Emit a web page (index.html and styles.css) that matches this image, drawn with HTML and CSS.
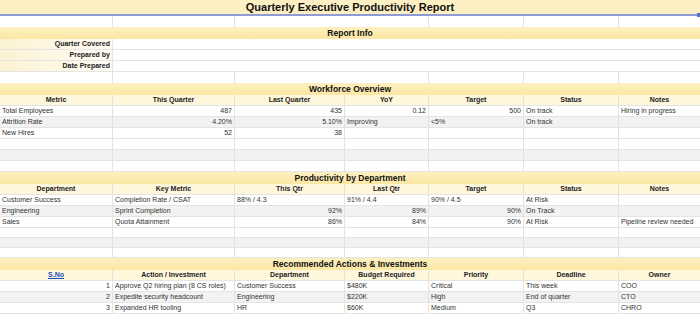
FILE: index.html
```html
<!DOCTYPE html>
<html>
<head>
<meta charset="utf-8">
<link rel="stylesheet" href="styles.css">
</head>
<body>
<div class="sheet">
  <div class="title">Quarterly Executive Productivity Report</div>
  <div class="row spacer"><div></div><div></div><div class="m2"></div><div></div><div></div><div></div></div>

  <div class="section">Report Info</div>
  <div class="row info"><div class="lab">Quarter Covered</div><div class="span"></div></div>
  <div class="row info"><div class="lab">Prepared by</div><div class="span"></div></div>
  <div class="row info"><div class="lab">Date Prepared</div><div class="span"></div></div>
  <div class="row spacer"><div></div><div></div><div class="m2"></div><div></div><div></div><div></div></div>

  <div class="section">Workforce Overview</div>
  <div class="row head"><div>Metric</div><div>This Quarter</div><div>Last Quarter</div><div>YoY</div><div>Target</div><div>Status</div><div>Notes</div></div>
  <div class="row"><div>Total Employees</div><div class="r">487</div><div class="r">435</div><div class="r">0.12</div><div class="r">500</div><div>On track</div><div>Hiring in progress</div></div>
  <div class="row alt"><div>Attrition Rate</div><div class="r">4.20%</div><div class="r">5.10%</div><div>Improving</div><div>&lt;5%</div><div>On track</div><div></div></div>
  <div class="row"><div>New Hires</div><div class="r">52</div><div class="r">38</div><div></div><div></div><div></div><div></div></div>
  <div class="row"><div></div><div></div><div></div><div></div><div></div><div></div><div></div></div>
  <div class="row alt"><div></div><div></div><div></div><div></div><div></div><div></div><div></div></div>
  <div class="row"><div></div><div></div><div></div><div></div><div></div><div></div><div></div></div>

  <div class="section">Productivity by Department</div>
  <div class="row head"><div>Department</div><div>Key Metric</div><div>This Qtr</div><div>Last Qtr</div><div>Target</div><div>Status</div><div>Notes</div></div>
  <div class="row"><div>Customer Success</div><div>Completion Rate / CSAT</div><div>88% / 4.3</div><div>91% / 4.4</div><div>90% / 4.5</div><div>At Risk</div><div></div></div>
  <div class="row alt"><div>Engineering</div><div>Sprint Completion</div><div class="r">92%</div><div class="r">89%</div><div class="r">90%</div><div>On Track</div><div></div></div>
  <div class="row"><div>Sales</div><div>Quota Attainment</div><div class="r">86%</div><div class="r">84%</div><div class="r">90%</div><div>At Risk</div><div>Pipeline review needed</div></div>
  <div class="row short"><div></div><div></div><div></div><div></div><div></div><div></div><div></div></div>
  <div class="row short alt"><div></div><div></div><div></div><div></div><div></div><div></div><div></div></div>
  <div class="row short"><div></div><div></div><div></div><div></div><div></div><div></div><div></div></div>

  <div class="section">Recommended Actions &amp; Investments</div>
  <div class="row head"><div><a class="link" href="#">S.No</a></div><div>Action / Investment</div><div>Department</div><div>Budget Required</div><div>Priority</div><div>Deadline</div><div>Owner</div></div>
  <div class="row"><div class="r">1</div><div>Approve Q2 hiring plan (8 CS roles)</div><div>Customer Success</div><div>$480K</div><div>Critical</div><div>This week</div><div>COO</div></div>
  <div class="row alt"><div class="r">2</div><div>Expedite security headcount</div><div>Engineering</div><div>$220K</div><div>High</div><div>End of quarter</div><div>CTO</div></div>
  <div class="row"><div class="r">3</div><div>Expanded HR tooling</div><div>HR</div><div>$60K</div><div>Medium</div><div>Q3</div><div>CHRO</div></div>
  <div class="handle"></div>
</div>
</body>
</html>
```
FILE: styles.css
```css
* { box-sizing: border-box; }
html, body { margin: 0; padding: 0; background: #fff; }
body { font-family: "Liberation Sans", Arial, sans-serif; color: #333; }
.sheet { width: 700px; position: relative; overflow: hidden; }
.title {
  height: 16px;
  background: #fcefc2;
  border-bottom: 2px solid #8f9bd6;
  font-weight: bold;
  font-size: 11px;
  line-height: 14px;
  text-align: center;
  color: #111;
}
.section {
  height: 12px;
  background: linear-gradient(#fdf0c0, #fbe7a4);
  font-weight: bold;
  font-size: 8.5px;
  line-height: 12px;
  text-align: center;
  color: #111;
}
.row {
  display: grid;
  grid-template-columns: 113px 122px 110px 84px 95px 95px 81px;
  height: 11px;
  font-size: 7px;
  line-height: 10px;
  border-bottom: 1px solid #e4e4e4;
}
.row.short { height: 10px; }
.row > div {
  border-right: 1px solid #e2e2e2;
  padding: 0 2px;
  white-space: nowrap;
  overflow: hidden;
}
.row > div:last-child { border-right: none; }
.row.alt { background: #f2f2f2; }
.row .r { text-align: right; }
.row.spacer { grid-template-columns: 113px 122px 194px 95px 95px 81px; border-bottom: none; }
.row.spacer .m2 { }
.row.head { background: #fef7dc; font-weight: bold; color: #222; }
.row.head > div { text-align: center; }
.row.info { grid-template-columns: 113px 587px; }
.row.info .lab {
  text-align: right;
  font-weight: bold;
  color: #222;
  background: linear-gradient(90deg, #fcf2d4, #fffcf4);
  border-right: 1px solid #e6e6e6;
}
.link { color: #1a4fc4; text-decoration: underline; font-weight: bold; }
.handle {
  position: absolute;
  right: 0;
  top: 13px;
  width: 3px;
  height: 4px;
  background: #5a72c8;
}
```
